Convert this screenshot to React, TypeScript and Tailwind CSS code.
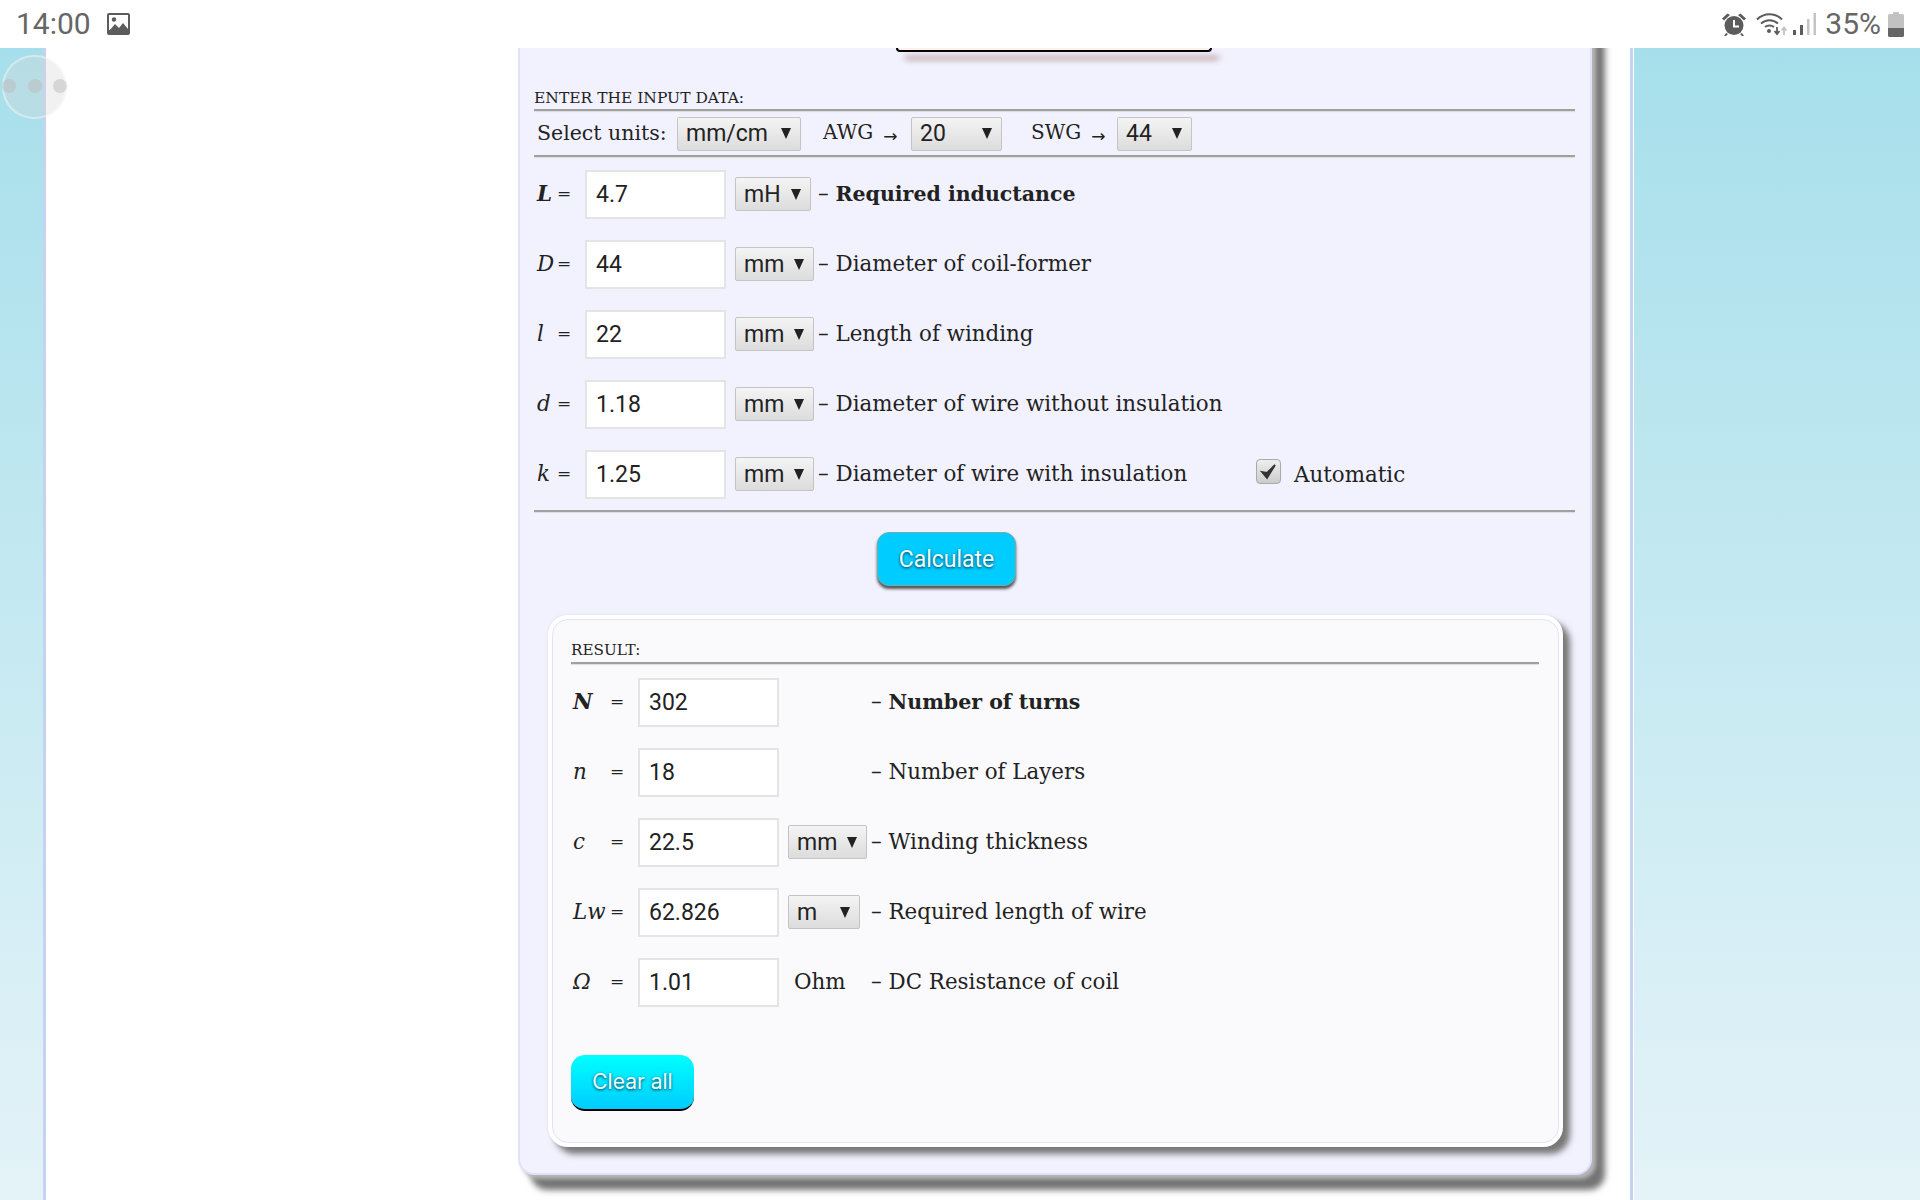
import type { ReactNode } from "react";

const serif = "font-['DejaVu_Serif',serif]";

function Hr({ className = "" }: { className?: string }) {
  return <div className={`h-[2px] bg-[#a0a0a0] shadow-[0_1px_1px_#ddd] ${className}`} />;
}

function Arrow() {
  return <span className="ml-[10px] font-['DejaVu_Sans',sans-serif] text-[17px] align-[-3px]">→</span>;
}

function Select({ value, width }: { value: string; width: string }) {
  return (
    <div
      className={`${width} h-[34px] flex items-center justify-between pl-2 pr-[9px] border border-[#c4c4c4] rounded-[2px] bg-gradient-to-b from-[#f4f4f4] to-[#dcdcdc] font-['Roboto',sans-serif] text-[23px] text-[#222] shrink-0`}
    >
      <span className="pt-[2px]">{value}</span>
      <svg width="10" height="11" viewBox="0 0 10 11">
        <path d="M0 0h10L5 11z" fill="#222" />
      </svg>
    </div>
  );
}

function Field({ value }: { value: string }) {
  return (
    <input
      readOnly
      value={value}
      className="w-[141px] h-[49px] shrink-0 bg-white border-2 border-[#e4e4e4] pl-[9px] font-['Roboto',sans-serif] text-[23px] text-[#222] outline-none"
    />
  );
}

const inputValue: Record<string, string> = { L: "4.7", D: "44", l: "22", d: "1.18", k: "1.25" };

function InputRow({
  sym,
  unit,
  unitWidth,
  strong,
  children,
}: {
  sym: string;
  unit: string;
  unitWidth: string;
  strong?: boolean;
  children: ReactNode;
}) {
  return (
    <div className={`h-[70px] flex items-center pl-[3px] ${serif} text-[21.4px] text-[#222]`}>
      <span className={`w-[20px] shrink-0 italic ${strong ? "font-bold" : ""}`}>{sym}</span>
      <span className="w-[28px] shrink-0 text-[17px]">=</span>
      <Field value={inputValue[sym]} />
      <div className="w-[9px] shrink-0" />
      <div className="w-[83px] shrink-0">
        <Select value={unit} width={unitWidth} />
      </div>
      {children}
    </div>
  );
}

function ResultRow({
  sym,
  value,
  unit,
  strong,
  label,
}: {
  sym: string;
  value: string;
  unit?: ReactNode;
  strong?: boolean;
  label: string;
}) {
  return (
    <div className={`h-[70px] flex items-center pl-[2px] ${serif} text-[21.4px] text-[#222]`}>
      <span className={`w-[37px] shrink-0 italic ${strong ? "font-bold" : ""}`}>{sym}</span>
      <span className="w-[28px] shrink-0 text-[17px]">=</span>
      <Field value={value} />
      <div className="w-[92px] shrink-0 pl-[9px] flex items-center">{unit}</div>
      <span className="whitespace-nowrap">
        – {strong ? <b className="text-[20.5px]">{label}</b> : label}
      </span>
    </div>
  );
}

function StatusBar() {
  return (
    <div className="relative z-10 h-12 shrink-0 bg-white flex items-center justify-between pl-4 pr-4 font-['Roboto',sans-serif] text-[#666]">
      <div className="flex items-center gap-[16px]">
        <span className="text-[30px] leading-none">14:00</span>
        <svg width="23" height="22" viewBox="0 0 23 22">
          <rect width="23" height="22" rx="2" fill="#5c5c5c" />
          <rect x="2" y="2" width="19" height="15" fill="#fff" />
          <circle cx="7" cy="6.5" r="2.2" fill="#5c5c5c" />
          <path d="M2 18l6-7 4 4 4-5 5 6v2H2z" fill="#5c5c5c" />
        </svg>
      </div>
      <div className="flex items-center">
        <svg width="26" height="25" viewBox="0 0 26 25" fill="#5c5c5c">
          <circle cx="13" cy="13.5" r="9.5" />
          <path d="M1 6.5 6.5 1.5 9 3 3 8.5zM25 6.5 19.5 1.5 17 3 23 8.5zM5 21l-2 3h2l2-2zM21 21l2 3h-2l-2-2z" />
          <path d="M13 8v6.5h5" fill="none" stroke="#fff" strokeWidth="2" />
        </svg>
        <svg className="ml-[9px]" width="32" height="24" viewBox="0 0 32 24" fill="none">
          <path d="M1 7.5c7-7 18-7 25 0M5 11.5c5-4.500 12-4.500 17 0M9 15c2.500-2 6.500-2 9 0" stroke="#5c5c5c" strokeWidth="2" />
          <circle cx="13" cy="19" r="2" fill="#5c5c5c" />
          <path d="M21 15v6M18.500 19l2.500 3 2.500-3" stroke="#5c5c5c" strokeWidth="1.800" />
          <path d="M28 23v-7M25.500 18.500l2.500-3 2.500 3" stroke="#c4c4c4" strokeWidth="1.800" />
        </svg>
        <svg className="ml-[5px]" width="24" height="24" viewBox="0 0 24 24">
          <rect x="0" y="18" width="3" height="5" fill="#5c5c5c" />
          <rect x="7" y="13" width="3" height="10" fill="#5c5c5c" />
          <rect x="14" y="7" width="2.500" height="16" fill="#c4c4c4" />
          <rect x="20.500" y="1" width="2.500" height="22" fill="#c4c4c4" />
        </svg>
        <span className="ml-[8px] text-[30px] leading-none">35%</span>
        <svg className="ml-[7px]" width="16" height="25" viewBox="0 0 16 25">
          <path d="M5 0h6v2h3.500q1.500 0 1.500 1.500V16H0V3.500Q0 2 1.500 2H5z" fill="#c2c2c2" />
          <path d="M0 16h16v7.500q0 1.500-1.500 1.500h-13Q0 25 0 23.500z" fill="#666" />
        </svg>
      </div>
    </div>
  );
}

export default function App() {
  return (
    <div className="relative h-[1200px] w-[1920px] overflow-hidden flex flex-col bg-white">
      <StatusBar />
      <div className="flex-1 flex min-h-0">
        <div className="w-[46px] shrink-0 bg-gradient-to-b from-[#a6dfeb] to-[#e4f3f8] border-r-[3px] border-[#c6d2f2]" />

        <div className="w-[1584px] shrink-0 pl-[472px]">
          {/* panel starts above the fold, the page is scrolled */}
          <div className="-mt-[40px] pt-[40px] w-[1074px] h-[1167px] bg-[#f2f2ff] border-x-2 border-b-2 border-[#e0e0f8] rounded-b-[16px] shadow-[4px_4px_4px_#b8b8b8,13px_15px_6px_#747474] pl-[14px] pr-[15px]">
            <div className="ml-[362px] w-[316px] h-[4px] bg-[#fff0f0] border-b-2 border-x-2 border-black rounded-b-[12px] shadow-[8px_8px_6px_#b89a9a]" />

            <div className={`mt-[36px] h-[20px] pt-[1px] flex items-center ${serif} text-[15.5px] text-[#222]`}>ENTER THE INPUT DATA:</div>
            <Hr className="mt-[1px]" />
            <div className={`h-[44px] pt-[1px] flex items-center pl-[3px] ${serif} text-[20.5px] text-[#222]`}>
              <span className="w-[140px] shrink-0">Select units:</span>
              <Select value="mm/cm" width="w-[124px]" />
              <span className="ml-[22px] w-[88px] shrink-0 text-[20px] whitespace-nowrap">
                AWG
                <Arrow />
              </span>
              <Select value="20" width="w-[91px]" />
              <span className="ml-[29px] w-[86px] shrink-0 text-[20px] whitespace-nowrap">
                SWG
                <Arrow />
              </span>
              <Select value="44" width="w-[75px]" />
            </div>
            <Hr />

            <div className="mt-[2px]">
              <InputRow sym="L" unit="mH" unitWidth="w-[76px]" strong>
                <span className="whitespace-nowrap">
                  – <b className="text-[20.5px]">Required inductance</b>
                </span>
              </InputRow>
              <InputRow sym="D" unit="mm" unitWidth="w-[79px]">
                <span className="whitespace-nowrap">– Diameter of coil-former</span>
              </InputRow>
              <InputRow sym="l" unit="mm" unitWidth="w-[79px]">
                <span className="whitespace-nowrap">– Length of winding</span>
              </InputRow>
              <InputRow sym="d" unit="mm" unitWidth="w-[79px]">
                <span className="whitespace-nowrap">– Diameter of wire without insulation</span>
              </InputRow>
              <InputRow sym="k" unit="mm" unitWidth="w-[79px]">
                <span className="w-[438px] shrink-0 whitespace-nowrap">– Diameter of wire with insulation</span>
                <div className="w-[25px] h-[25px] shrink-0 -mt-[6px] rounded-[4px] border border-[#aaa] bg-gradient-to-b from-[#eee] to-[#ccc] flex items-center justify-center">
                  <svg width="17" height="17" viewBox="0 0 17 17">
                    <path d="M2 9l5 6 8-13-8 8z" fill="#333" stroke="#333" strokeWidth="1.800" />
                  </svg>
                </div>
                <span className="ml-[13px] mt-[3px]">Automatic</span>
              </InputRow>
            </div>
            <Hr className="mt-[1px]" />

            <button className="block ml-[343px] mt-[20px] w-[139px] h-[54px] pt-[2px] rounded-[12px] bg-[#00ccff] border border-[#7aa] shadow-[0_3px_3px_#555] font-['Roboto',sans-serif] text-[23px] text-[#eefff8] [text-shadow:0_1px_3px_#035]">
              Calculate
            </button>

            <div className="ml-[14px] mt-[29px] w-[1015px] h-[532px] rounded-[20px] border-[5px] border-white outline outline-1 -outline-offset-5 outline-[#e2e2fa] bg-[#fafafd] shadow-[7px_7px_6px_#787878,0_0_3px_#ddd] pl-[18px] pr-[19px]">
              <div className={`mt-[17px] h-[24px] pt-[3px] flex items-center ${serif} text-[15.2px] text-[#222]`}>RESULT:</div>
              <Hr className="mt-[1px]" />
              <div className="mt-[3px]">
                <ResultRow sym="N" value="302" strong label="Number of turns" />
                <ResultRow sym="n" value="18" label="Number of Layers" />
                <ResultRow sym="c" value="22.5" unit={<Select value="mm" width="w-[79px]" />} label="Winding thickness" />
                <ResultRow sym="Lw" value="62.826" unit={<Select value="m" width="w-[72px]" />} label="Required length of wire" />
                <ResultRow sym="Ω" value="1.01" unit={<span className="ml-[6px]">Ohm</span>} label="DC Resistance of coil" />
              </div>
              <button className="block mt-[38px] w-[123px] h-[56px] rounded-[14px] bg-gradient-to-b from-[#00ffff] to-[#00ccff] border-b-2 border-black font-['Inter',sans-serif] text-[21px] text-[#eefffa] [text-shadow:0_1px_3px_#035]">
                Clear all
              </button>
            </div>
          </div>
        </div>

        <div className="flex-1 bg-gradient-to-b from-[#a6dfeb] to-[#e4f3f8] border-l-[3px] border-[#c6d2f2] shadow-[inset_1px_0_0_#fff]" />
      </div>

      {/* floating assist button */}
      <div className="absolute left-[2px] top-[55px] w-[65px] h-[64px] rounded-full bg-[#d8d8d8]/35 border-2 border-white/40">
        <div className="absolute left-[-2px] top-[22px] w-[14px] h-[14px] rounded-full bg-[#bbb]/50" />
        <div className="absolute left-[24px] top-[22px] w-[14px] h-[14px] rounded-full bg-[#bbb]/50" />
        <div className="absolute left-[49px] top-[22px] w-[14px] h-[14px] rounded-full bg-[#bbb]/50" />
      </div>
    </div>
  );
}
